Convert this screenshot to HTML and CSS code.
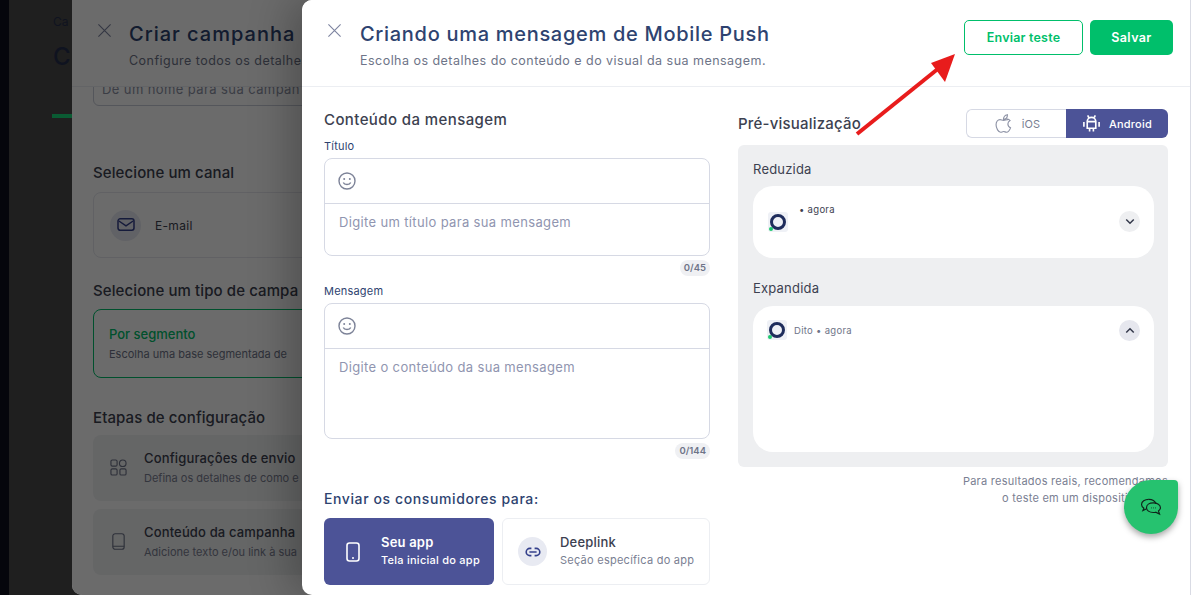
FILE: index.html
```html
<!doctype html>
<html lang="pt-BR">

<head>
  <meta charset="utf-8">
  <title>Criando uma mensagem de Mobile Push</title>
  <link rel="stylesheet" href="styles.css">
</head>

<body>

  <!-- page behind the drawers -->
  <div class="page">
    <div class="rail"></div>
    <div class="page-main">
      <div class="crumb">Ca</div>
      <div class="page-title">C</div>
      <div class="page-tab"></div>
    </div>
  </div>

  <!-- first drawer, only its left part shows -->
  <div class="drawer drawer-back">
    <div class="drawer-head">
      <svg class="close" viewBox="0 0 16 16"><path d="M1.5 1.5l13 13M14.5 1.5l-13 13"/></svg>
      <div class="head-text">
        <div class="drawer-title back-title">Criar campanha</div>
        <div class="drawer-sub">Configure todos os detalhes</div>
      </div>
    </div>
    <div class="back-body">
      <div class="name-input">Dê um nome para sua campan</div>

      <div class="back-section channel-section">Selecione um canal</div>
      <div class="channel">
        <span class="channel-icon">
          <svg viewBox="0 0 20 18" width="18" height="16"><rect x="1" y="2" width="18" height="13" rx="2.5"/><path d="M2 4.5l8 5.5 8-5.5"/></svg>
        </span>
        E-mail
      </div>

      <div class="back-section type-section">Selecione um tipo de campa</div>
      <div class="segment">
        <div class="segment-title">Por segmento</div>
        <div class="segment-sub">Escolha uma base segmentada de</div>
      </div>

      <div class="back-section steps-section">Etapas de configuração</div>
      <div class="step">
        <svg class="step-icon" viewBox="0 0 18 18"><rect x="1" y="1" width="6.5" height="6.5" rx="1.5"/><circle cx="13.5" cy="4.5" r="3.5"/><rect x="1" y="10.5" width="6.5" height="6.5" rx="1.5"/><rect x="10.5" y="10.5" width="6.5" height="6.5" rx="1.5"/></svg>
        <div>
          <div class="step-title">Configurações de envio</div>
          <div class="step-sub">Defina os detalhes de como e</div>
        </div>
      </div>
      <div class="step">
        <svg class="step-icon" viewBox="0 0 18 18"><rect x="3" y="0.8" width="12" height="16.4" rx="2.5"/><path d="M3 14h12"/></svg>
        <div>
          <div class="step-title">Conteúdo da campanha</div>
          <div class="step-sub">Adicione texto e/ou link à sua</div>
        </div>
      </div>
    </div>
  </div>
  <div class="scrim"></div>

  <!-- second drawer -->
  <div class="drawer drawer-front">
    <div class="drawer-head front-head">
      <svg class="close" viewBox="0 0 16 16"><path d="M1.5 1.5l13 13M14.5 1.5l-13 13"/></svg>
      <div class="head-text">
        <div class="drawer-title">Criando uma mensagem de Mobile Push</div>
        <div class="drawer-sub">Escolha os detalhes do conteúdo e do visual da sua mensagem.</div>
      </div>
      <button class="btn btn-outline">Enviar teste</button>
      <button class="btn btn-fill">Salvar</button>
    </div>

    <div class="columns">
      <div class="col-form">
        <div class="heading form-heading">Conteúdo da mensagem</div>

        <div class="field-label">Título</div>
        <div class="editor">
          <div class="editor-tools">
            <svg class="smile" viewBox="0 0 18 18"><circle cx="9" cy="9" r="8"/><path d="M5.3 10.6c1 2.6 6.4 2.6 7.4 0"/><circle class="eye" cx="6.2" cy="7" r="1"/><circle class="eye" cx="11.8" cy="7" r="1"/></svg>
          </div>
          <div class="editor-text editor-title">Digite um título para sua mensagem</div>
        </div>
        <div class="counter-row"><span class="counter">0/45</span></div>

        <div class="field-label label-msg">Mensagem</div>
        <div class="editor">
          <div class="editor-tools">
            <svg class="smile" viewBox="0 0 18 18"><circle cx="9" cy="9" r="8"/><path d="M5.3 10.6c1 2.6 6.4 2.6 7.4 0"/><circle class="eye" cx="6.2" cy="7" r="1"/><circle class="eye" cx="11.8" cy="7" r="1"/></svg>
          </div>
          <div class="editor-text editor-msg">Digite o conteúdo da sua mensagem</div>
        </div>
        <div class="counter-row"><span class="counter">0/144</span></div>

        <div class="send-heading">Enviar os consumidores para:</div>
        <div class="targets">
          <div class="target target-on">
            <svg class="target-phone" viewBox="0 0 14 20"><rect x="1" y="1" width="12" height="18" rx="2.5"/><path d="M6 16h2"/></svg>
            <div>
              <div class="target-title">Seu app</div>
              <div class="target-sub">Tela inicial do app</div>
            </div>
          </div>
          <div class="target target-off">
            <span class="link-icon">
              <svg viewBox="0 0 20 12" width="16" height="10"><path d="M8 1.500H6a4.500 4.500 0 0 0 0 9h2M12 1.500h2a4.500 4.500 0 0 1 0 9h-2M5.500 6h9"/></svg>
            </span>
            <div>
              <div class="target-title">Deeplink</div>
              <div class="target-sub">Seção específica do app</div>
            </div>
          </div>
        </div>
      </div>

      <div class="col-preview">
        <div class="preview-head">
          <div class="heading">Pré-visualização</div>
          <div class="os-toggle">
            <div class="os os-ios">
              <svg class="apple" viewBox="0 0 24 24"><path d="M16.500 7.500c-1.600 0-2.600 1-4.300 1s-2.600-1-4.200-1C5.500 7.500 3.500 10 3.500 13.500c0 4 2.800 8.500 5.200 8.500 1.300 0 2-.8 3.400-.8s2 .8 3.400.8c1.800 0 3.600-2.600 4.500-5-2-.9-3-2.400-3-4.300 0-1.800 1-3.200 2.500-4-1-1.300-2.300-1.700-3-1.700zM12 7.500c0-2.800 1.600-5 4.500-5.500 0 3-1.600 5.200-4.500 5.500z"/></svg>
              iOS
            </div>
            <div class="os os-android">
              <svg class="droid" viewBox="0 0 20 20"><path d="M5.500 8a4.500 4.500 0 0 1 9 0zM7 3.500L6 1.500M13 3.500l1-2M5.500 8h9v7h-9zM8 15v3.500M12 15v3.500M2 8.500v5M18 8.500v5M8 6h.01M12 6h.01"/></svg>
              Android
            </div>
          </div>
        </div>

        <div class="preview">
          <div class="preview-label">Reduzida</div>
          <div class="notice notice-small">
            <span class="logo"><span class="logo-ring"></span><span class="logo-dot"></span></span>
            <span class="notice-meta meta-small">• agora</span>
            <span class="chevron chevron-down">
              <svg viewBox="0 0 12 8" width="10" height="7"><path d="M1.500 1.500L6 6l4.500-4.500"/></svg>
            </span>
          </div>
          <div class="preview-label label-expanded">Expandida</div>
          <div class="notice notice-big">
            <span class="logo"><span class="logo-ring"></span><span class="logo-dot"></span></span>
            <span class="notice-meta">Dito • agora</span>
            <span class="chevron chevron-up">
              <svg viewBox="0 0 12 8" width="10" height="7"><path d="M1.500 6.500L6 2l4.500 4.500"/></svg>
            </span>
          </div>
        </div>

        <div class="footnote">Para resultados reais, recomendamos<br>o teste em um dispositivo real.</div>
      </div>
    </div>
  </div>

  <!-- annotation arrow over the shot -->
  <svg class="arrow" viewBox="0 0 110 90" width="110" height="90">
    <path d="M6 84L88 18" stroke="#e81c1c" stroke-width="4" fill="none"/>
    <path d="M104 4L94 32 80 13z" fill="#e81c1c"/>
  </svg>

  <!-- chat button -->
  <div class="chat">
    <svg viewBox="0 0 24 20" width="22" height="18">
      <path d="M9.500 1.500c-4.400 0-8 2.400-8 5.600 0 1.700 1 3.100 2.600 4.200L3 14l3.600-1.700"/>
      <path d="M17.500 6.500c-1-3-4.200-5-8-5"/>
      <path d="M14.500 5.500c4.400 0 8 2.200 8 5.200 0 1.500-.9 2.800-2.200 3.800l1.200 3.300-4.300-2c-.9.2-1.800.3-2.700.3-4.400 0-7.500-2.300-7.500-5.400s3.100-5.200 7.500-5.200z"/>
      <path class="dots" d="M12 11h.8M14.300 11h.8M16.600 11h.8"/>
    </svg>
  </div>

</body>

</html>
```

FILE: styles.css
```css
html,
body {
  height: 100%;
}

body {
  margin: 0;
  overflow: hidden;
  position: relative;
  font-family: 'Inter', 'Noto Sans', sans-serif;
  background-color: #1f1f1f;
  color: #3c4150;
}

/* page behind */
.page {
  display: flex;
  width: 72px;
  height: 100%;
}

.rail {
  flex: none;
  width: 9px;
  background-color: #05060c;
}

.page-main {
  flex: 1;
  min-width: 0;
  padding: 14px 0 0 44px;
  background-color: #1f1f1f;
  color: #0f1320;
}

.crumb {
  font-size: 12px;
}

.page-title {
  margin-top: 13px;
  font-size: 24px;
  font-weight: 500;
}

.page-tab {
  height: 4px;
  margin-top: 43px;
  margin-left: -1px;
  background-color: #0a5b33;
}

/* drawers */
.drawer {
  position: absolute;
  z-index: 0;
  top: 0;
  bottom: 0;
  background-color: #fff;
  overflow: hidden;
}

.drawer-back {
  left: 72px;
  width: 240px;
  border-radius: 0 0 0 10px;
}

.scrim {
  position: absolute;
  top: 0;
  bottom: 0;
  left: 72px;
  width: 240px;
  border-radius: 0 0 0 10px;
  background-color: rgba(0, 0, 0, 0.58);
}

.drawer-front {
  left: 302px;
  right: 0;
  border-radius: 10px 0 0 10px;
  border-right: 1px solid #d9dbe4;
  box-shadow: -12px 0 40px rgba(0, 0, 0, 0.25);
}

.drawer-head {
  position: relative;
  z-index: 1;
  display: flex;
  height: 87px;
  box-sizing: border-box;
  padding: 20px 0 0 25px;
  background-color: #fff;
  border-bottom: 1px solid #eceef2;
}

.close {
  flex: none;
  width: 15px;
  height: 15px;
  margin: 3px 18px 0 0;
  fill: none;
  stroke: #7d84a0;
  stroke-width: 1.2;
}

.drawer-back .close {
  margin-right: 17px;
}

.head-text {
  flex: 1;
  min-width: 0;
  margin-top: 1px;
}

.drawer-title {
  font-size: 20px;
  line-height: 27px;
  font-weight: 500;
  letter-spacing: 0.7px;
  color: #2e4370;
  white-space: nowrap;
}

.back-title {
  letter-spacing: 1px;
}

.drawer-sub {
  margin-top: 5px;
  font-size: 12.5px;
  line-height: 16px;
  letter-spacing: 0.47px;
  color: #6e7488;
  white-space: nowrap;
}

.front-head {
  padding-right: 17px;
}

.btn {
  height: 35px;
  border-radius: 5px;
  font-family: inherit;
  font-size: 12.5px;
  font-weight: 600;
  letter-spacing: 0.4px;
}

.btn-outline {
  width: 119px;
  margin-right: 7px;
  border: 1px solid #00bf6b;
  background-color: #fff;
  color: #00bf6b;
  letter-spacing: 0.2px;
}

.btn-fill {
  width: 83px;
  border: 0;
  background-color: #00bf6b;
  color: #fff;
}

/* first drawer content */
.back-body {
  padding: 0 0 0 21px;
}

.name-input {
  box-sizing: border-box;
  height: 44px;
  margin-top: -25px;
  padding: 18px 0 0 8px;
  border: 1px solid #c8ccd8;
  border-radius: 6px;
  font-size: 13px;
  letter-spacing: 0.4px;
  color: #8d92a5;
  white-space: nowrap;
}

.back-section {
  font-size: 15px;
  line-height: 20px;
  font-weight: 500;
  letter-spacing: 0.1px;
  color: #3c4150;
  white-space: nowrap;
}

.channel-section {
  margin-top: 57px;
}

.channel {
  display: flex;
  align-items: center;
  gap: 14px;
  box-sizing: border-box;
  height: 66px;
  margin-top: 9px;
  padding-left: 16px;
  border: 1px solid #e6e8ee;
  border-radius: 8px;
  font-size: 12px;
  letter-spacing: 0.3px;
}

.channel-icon {
  display: flex;
  align-items: center;
  justify-content: center;
  width: 31px;
  height: 31px;
  border-radius: 50%;
  background-color: #e8eaf2;
}

.channel-icon svg {
  fill: none;
  stroke: #34408c;
  stroke-width: 1.7;
}

.type-section {
  margin-top: 23px;
}

.segment {
  box-sizing: border-box;
  height: 69px;
  margin-top: 8px;
  padding: 16px 0 0 15px;
  border: 1px solid #00bf6b;
  border-radius: 8px;
}

.segment-title {
  font-size: 13px;
  font-weight: 500;
  color: #00bf6b;
}

.segment-sub {
  margin-top: 5px;
  font-size: 11px;
  color: #6e7488;
  white-space: nowrap;
}

.steps-section {
  margin: 30px 0 -1px;
}

.step {
  display: flex;
  align-items: center;
  gap: 17px;
  box-sizing: border-box;
  height: 66px;
  margin-top: 8px;
  padding: 0 0 1px 17px;
  border-radius: 8px;
  background-color: #f1f2f4;
}

.step-icon {
  flex: none;
  width: 17px;
  height: 17px;
  fill: none;
  stroke: #6d7388;
  stroke-width: 1.2;
}

.step-title {
  font-size: 13px;
  font-weight: 500;
  letter-spacing: 0.15px;
  white-space: nowrap;
}

.step-sub {
  margin-top: 5px;
  font-size: 11px;
  color: #7a8092;
  white-space: nowrap;
}

/* second drawer columns */
.columns {
  display: flex;
  gap: 28px;
  padding-left: 22px;
}

.col-form {
  width: 386px;
  padding-top: 23px;
}

.col-preview {
  width: 430px;
  padding-top: 22px;
}

.heading {
  font-size: 15px;
  line-height: 20px;
  font-weight: 500;
  color: #3c4150;
  letter-spacing: 0.2px;
  white-space: nowrap;
}

.form-heading {
  letter-spacing: 0.4px;
}

.field-label {
  margin-top: 9px;
  font-size: 11px;
  line-height: 14px;
  letter-spacing: 0.2px;
  color: #2e4370;
}

.field-label.label-msg {
  margin-top: 0;
}

.editor {
  margin-top: 5px;
  border: 1px solid #d6d9e4;
  border-radius: 8px;
}

.editor-tools {
  display: flex;
  align-items: center;
  height: 44px;
  padding-left: 13px;
  border-bottom: 1px solid #d6d9e4;
}

.smile {
  width: 18px;
  height: 18px;
  fill: none;
  stroke: #7d8398;
  stroke-width: 1.4;
}

.smile .eye {
  fill: #7d8398;
  stroke: none;
}

.editor-text {
  box-sizing: border-box;
  padding: 9px 0 0 14px;
  font-size: 13px;
  line-height: 18px;
  letter-spacing: 0.35px;
  color: #9095b0;
}

.editor-title {
  height: 51px;
}

.editor-msg {
  height: 89px;
}

.counter-row {
  display: flex;
  justify-content: flex-end;
  height: 28px;
  padding-top: 4px;
  box-sizing: border-box;
}

.counter {
  height: 16px;
  padding: 0 4px;
  border-radius: 8px;
  background-color: #eff0f3;
  font-size: 9.5px;
  line-height: 16px;
  font-weight: 600;
  color: #6e7488;
}

.send-heading {
  margin-top: 22px;
  font-size: 14px;
  line-height: 20px;
  font-weight: 500;
  color: #2e4370;
  letter-spacing: 0.6px;
}

.targets {
  display: flex;
  gap: 8px;
  margin-top: 9px;
}

.target {
  display: flex;
  align-items: center;
  box-sizing: border-box;
  height: 67px;
  padding-bottom: 3px;
  border-radius: 6px;
}

.target-on {
  width: 170px;
  gap: 21px;
  padding-left: 22px;
  background-color: #4c5397;
  color: #fff;
}

.target-off {
  width: 208px;
  gap: 13px;
  padding-left: 15px;
  border: 1px solid #eceef2;
}

.target-phone {
  width: 14px;
  height: 20px;
  margin-top: 3px;
  fill: none;
  stroke: #fff;
  stroke-width: 1.6;
}

.link-icon {
  display: flex;
  align-items: center;
  justify-content: center;
  width: 29px;
  height: 29px;
  margin-top: 3px;
  border-radius: 50%;
  background-color: #e8eaf2;
}

.link-icon svg {
  fill: none;
  stroke: #34408c;
  stroke-width: 2;
}

.target-title {
  font-size: 13px;
  line-height: 18px;
  font-weight: 600;
  letter-spacing: 0.2px;
}

.target-off .target-title {
  font-weight: 500;
}

.target-sub {
  margin-top: 2px;
  font-size: 11px;
  line-height: 15px;
  font-weight: 500;
  letter-spacing: 0.25px;
  white-space: nowrap;
}

.target-off .target-sub {
  font-weight: 400;
  color: #7a8092;
}

/* preview */
.preview-head {
  display: flex;
  align-items: center;
  justify-content: space-between;
}

.preview-head .heading {
  margin-top: 1px;
}

.os-toggle {
  display: flex;
  width: 202px;
  height: 29px;
}

.os {
  display: flex;
  align-items: center;
  justify-content: center;
  gap: 8px;
  box-sizing: border-box;
  font-size: 11px;
  letter-spacing: 0.2px;
}

.os-ios {
  width: 100px;
  border: 1px solid #d6d9e4;
  border-right: 0;
  border-radius: 6px 0 0 6px;
  color: #7a8092;
}

.os-android {
  width: 102px;
  border-radius: 0 6px 6px 0;
  background-color: #4c5397;
  color: #fff;
  font-weight: 500;
}

.apple {
  width: 21px;
  height: 21px;
  fill: none;
  stroke: #8d92a5;
  stroke-width: 1.3;
}

.droid {
  width: 19px;
  height: 19px;
  fill: none;
  stroke: #fff;
  stroke-width: 1.7;
}

.preview {
  box-sizing: border-box;
  height: 322px;
  margin-top: 7px;
  padding: 15px 14px 0 15px;
  border-radius: 6px;
  background-color: #eeeff1;
}

.preview-label {
  font-size: 13px;
  line-height: 18px;
  letter-spacing: 0.2px;
  color: #3c4150;
}

.label-expanded {
  margin-top: 21px;
}

.notice {
  display: flex;
  align-items: flex-start;
  box-sizing: border-box;
  border-radius: 20px;
  background-color: #fff;
}

.notice-small {
  height: 72px;
  margin-top: 8px;
  padding: 26px 14px 0 15px;
}

.notice-big {
  height: 146px;
  margin-top: 9px;
  padding: 14px 14px 0 14px;
}

.logo {
  position: relative;
  flex: none;
  display: flex;
  align-items: center;
  justify-content: center;
  width: 20px;
  height: 20px;
  border-radius: 3px;
  background-color: #eff1f6;
}

.logo-ring {
  width: 10px;
  height: 10px;
  border: 3px solid #1f2d5c;
  border-radius: 50%;
}

.logo-dot {
  position: absolute;
  left: 1px;
  bottom: 1px;
  width: 4px;
  height: 4px;
  border-radius: 50%;
  background-color: #1ec96f;
}

.notice-meta {
  margin: 1px 0 0 7px;
  font-size: 9.5px;
  line-height: 20px;
  letter-spacing: 0.3px;
  color: #6e7488;
}

.meta-small {
  margin: -12px 0 0 11px;
  color: #3c4150;
}

.chevron {
  display: flex;
  align-items: center;
  justify-content: center;
  width: 21px;
  height: 21px;
  margin-left: auto;
  border-radius: 50%;
}

.chevron svg {
  fill: none;
  stroke: #34394b;
  stroke-width: 1.8;
}

.chevron-down {
  margin-top: -1px;
  background-color: #eeeff1;
}

.chevron-up {
  background-color: #e6e7ee;
}

.footnote {
  margin-top: 6px;
  font-size: 11px;
  line-height: 17px;
  letter-spacing: 0.25px;
  text-align: right;
  color: #7a8092;
}

/* things over the shot */
.arrow {
  position: absolute;
  left: 851px;
  top: 50px;
}

.chat {
  position: absolute;
  left: 1124px;
  top: 480px;
  display: flex;
  align-items: center;
  justify-content: center;
  width: 54px;
  height: 54px;
  border-radius: 50% 4px 50% 50%;
  background-color: #26c26f;
  box-shadow: 0 3px 6px rgba(0, 0, 0, 0.35);
}

.chat svg {
  fill: none;
  stroke: #10231a;
  stroke-width: 1.3;
}

.chat .dots {
  stroke-width: 1;
}
```
